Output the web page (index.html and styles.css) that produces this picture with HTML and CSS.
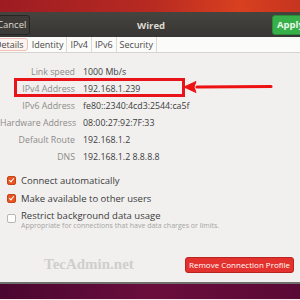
FILE: index.html
```html
<!DOCTYPE html>
<html lang="en">
<head>
  <meta charset="UTF-8" />
  <title>Wired</title>
  <link rel="stylesheet" href="styles.css">
</head>
<body>

  <div class="wall-top"></div>

  <div class="dialog">
    <header class="titlebar">
      <button class="btn-cancel">Cancel</button>
      <span class="title">Wired</span>
      <button class="btn-apply">Apply</button>
    </header>

    <nav class="tabs">
      <span class="tab active">Details</span>
      <span class="tab">Identity</span>
      <span class="tab">IPv4</span>
      <span class="tab">IPv6</span>
      <span class="tab">Security</span>
    </nav>

    <main class="content">
      <div class="details">
        <span class="label">Link speed</span><span class="value">1000 Mb/s</span>
        <span class="label">IPv4 Address</span><span class="value">192.168.1.239</span>
        <span class="label">IPv6 Address</span><span class="value">fe80::2340:4cd3:2544:ca5f</span>
        <span class="label">Hardware Address</span><span class="value">08:00:27:92:7F:33</span>
        <span class="label">Default Route</span><span class="value">192.168.1.2</span>
        <span class="label">DNS</span><span class="value">192.168.1.2 8.8.8.8</span>
      </div>

      <!-- annotation over the IPv4 row -->
      <div class="highlight"></div>
      <svg class="arrow" width="90" height="14" viewBox="0 0 90 14">
        <path d="M88 6.5 L14 7" stroke="#ee1111" stroke-width="3.2" stroke-linecap="round" fill="none"/>
        <path d="M1 7 L13 1.5 L11 7 L13 12.5 Z" fill="#ee1111" stroke="#ee1111" stroke-width="1" stroke-linejoin="round"/>
      </svg>

      <div class="options">
        <label class="check"><span class="box on"></span>Connect automatically</label>
        <label class="check"><span class="box on"></span>Make available to other users</label>
        <label class="check restrict">
          <span class="box"></span>
          <span class="check-text">
            Restrict background data usage
            <small>Appropriate for connections that have data charges or limits.</small>
          </span>
        </label>
      </div>

      <div class="bottom-row">
        <span class="watermark">TecAdmin.net</span>
        <button class="btn-remove">Remove Connection Profile</button>
      </div>
    </main>
  </div>

  <div class="wall-bottom"></div>

</body>
</html>
```

FILE: styles.css
```css
body {
  margin: 0;
  width: 300px;
  height: 300px;
  overflow: hidden;
  font-family: 'Open Sans', 'DejaVu Sans', sans-serif;
  font-size: 9px;
  color: #3c3c3c;
  background: #f1f0ef;
}

/* --- wallpaper edges --- */
.wall-top {
  height: 12px;
  background: linear-gradient(90deg, #9d1c22 0%, #b72a22 50%, #d8401f 80%, #c63520 100%);
}
.wall-bottom {
  height: 15px;
  border-top: 2px solid #6e6e6c;
  background: linear-gradient(90deg, #4a0630, #6a0d3d 50%, #5a0935);
}

/* --- header --- */
.titlebar {
  height: 25px;
  background: linear-gradient(#45443f, #373634);
  display: flex;
  align-items: center;
  justify-content: space-between;
  color: #dfdbd2;
}
.title {
  font-weight: bold;
  font-size: 9.5px;
  padding-top: 2px;
}
.btn-cancel,
.btn-apply {
  font-family: inherit;
  font-size: 9.5px;
  height: 20px;
  border-radius: 3px;
  padding: 0 6px;
}
.btn-cancel {
  margin-left: -7px;
  width: 37px;
  padding: 0 0 0 3px;
  text-align: left;
  background: #3c3b37;
  border: 1px solid #262624;
  color: #dfdbd2;
}
.btn-apply {
  margin-right: -4px;
  width: 32px;
  padding: 0 0 0 4px;
  text-align: left;
  overflow: hidden;
  background: #38b04a;
  border: 1px solid #2a8c39;
  color: #e9f7ea;
  font-weight: bold;
}

/* --- tabs --- */
.tabs {
  height: 15px;
  display: flex;
  align-items: stretch;
  background: #fbfbfa;
  border-bottom: 1px solid #d8d5d0;
}
.tab {
  display: flex;
  align-items: center;
  padding: 0 3px;
  border-right: 1px solid #dcd9d4;
  color: #4a4a48;
}
.tab.active {
  margin: 1px 1px 1px -9px;
  padding: 0 3px;
  border: 1px solid #f0c0b4;
  border-radius: 3px;
  background: #fdf4f1;
}

/* --- details --- */
.content {
  position: relative;
  height: 229px;
  padding-top: 10px;
  box-sizing: border-box;
}
.details {
  display: grid;
  grid-template-columns: 75px 1fr;
  column-gap: 8px;
  grid-auto-rows: 17px;
  align-items: center;
  font-size: 8.8px;
}
.label {
  text-align: right;
  color: #8d8b88;
  white-space: nowrap;
}
.value {
  white-space: nowrap;
}

.highlight {
  position: absolute;
  left: 14px;
  top: 25px;
  width: 165px;
  height: 13px;
  border: 3px solid #e8141a;
}
.arrow {
  position: absolute;
  left: 183px;
  top: 27px;
}

/* --- options --- */
.options {
  margin-top: 6px;
  padding-left: 7px;
  display: flex;
  flex-direction: column;
}
.check {
  display: flex;
  align-items: center;
  gap: 5px;
  height: 18px;
  font-size: 9.5px;
  color: #3c3c3c;
}
.check.restrict {
  align-items: flex-start;
  margin-top: 2px;
  height: 28px;
}
.restrict .box {
  margin-top: 5px;
}
.check-text {
  display: flex;
  flex-direction: column;
  line-height: 11px;
  padding-top: 1px;
}
.check-text small {
  font-size: 7px;
  color: #a6a4a0;
  line-height: 9px;
}
.box {
  width: 7px;
  height: 7px;
  border-radius: 2px;
  border: 1px solid #b9b6b0;
  background: #fff;
  position: relative;
  flex: none;
}
.box.on {
  background: #e95420;
  border-color: #c4461a;
}
.box.on::after {
  content: "";
  position: absolute;
  left: 2px;
  top: 0px;
  width: 2px;
  height: 4px;
  border-right: 1.5px solid #fff;
  border-bottom: 1.5px solid #fff;
  transform: rotate(40deg);
}

/* --- bottom --- */
.bottom-row {
  display: flex;
  justify-content: space-between;
  align-items: center;
  margin-top: 19px;
  padding: 0 6px 0 44px;
}
.watermark {
  font-family: 'Liberation Serif', serif;
  font-weight: bold;
  font-size: 15px;
  color: #d0cecb;
}
.btn-remove {
  font-family: inherit;
  font-size: 8px;
  height: 16px;
  padding: 0 3px;
  background: #e3312d;
  border: 1px solid #b92421;
  border-radius: 3px;
  color: #fff;
}
```
